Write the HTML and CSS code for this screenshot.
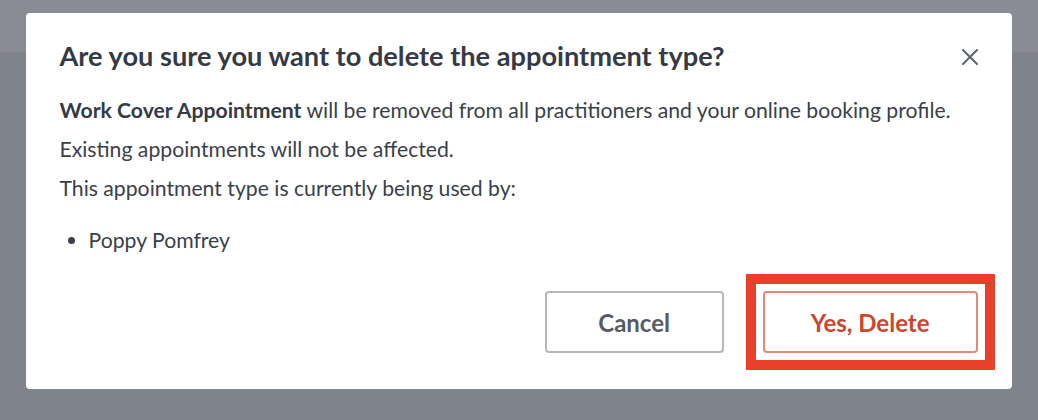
FILE: index.html
```html
<!DOCTYPE html>
<html lang="en">
<head>
    <meta charset="UTF-8">
    <meta name="viewport" content="width=device-width, initial-scale=1.0">
    <title>Delete appointment type</title>
    <link rel="stylesheet" href="styles.css">
</head>
<body>
    <div class="page-header"></div>
    <div class="page-body"></div>

    <div class="backdrop">
        <div class="modal">
            <div class="modal-header">
                <h2>Are you sure you want to delete the appointment type?</h2>
                <button class="btn-close" aria-label="Close">
                    <svg width="16" height="16" viewBox="0 0 16 16">
                        <path d="M1 1L15 15M15 1L1 15" stroke="#5d626c" stroke-width="2" stroke-linecap="round" fill="none"/>
                    </svg>
                </button>
            </div>
            <div class="modal-body">
                <p><strong>Work Cover Appointment</strong> will be removed from all practitioners and your online booking profile.</p>
                <p>Existing appointments will not be affected.</p>
                <p>This appointment type is currently being used by:</p>
                <ul>
                    <li>Poppy Pomfrey</li>
                </ul>
            </div>
            <div class="modal-footer">
                <button class="btn btn-cancel">Cancel</button>
                <span class="highlight">
                    <button class="btn btn-delete">Yes, Delete</button>
                </span>
            </div>
        </div>
    </div>
</body>
</html>
```

FILE: styles.css
```css
* {
    padding: 0;
    margin: 0;
    box-sizing: border-box;
}
body {
    font-family: Lato, "Open Sans", sans-serif;
    background: #7f838b;
    color: #3a3f4a;
    height: 420px;
    overflow: hidden;
}
.page-header {
    height: 53px;
    background: #898c94;
    border-bottom: 1px solid #83868e;
}
.backdrop {
    position: fixed;
    inset: 0;
    display: flex;
    justify-content: center;
    align-items: flex-start;
    padding: 13px 1px 0 0;
}
.modal {
    width: 986px;
    background: #fff;
    border-radius: 4px;
    padding: 27px 34px 36px;
}
.modal-header {
    display: flex;
    justify-content: space-between;
    align-items: center;
    margin-bottom: 25px;
}
.modal-header h2 {
    font-size: 27.2px;
    line-height: 32px;
    font-weight: 700;
    color: #353a45;
}
.btn-close {
    border: none;
    background: none;
    width: 16px;
    height: 16px;
    display: flex;
    margin-top: 2px;
    cursor: pointer;
}
.modal-body p {
    font-size: 21.2px;
    line-height: 27px;
    margin-bottom: 12px;
}
.modal-body strong {
    font-weight: 700;
    color: #353a45;
}
.modal-body ul {
    margin-top: 25px;
    padding-left: 29px;
    font-size: 21.2px;
    line-height: 27px;
}
.modal-footer {
    display: flex;
    justify-content: flex-end;
    gap: 39px;
    margin-top: 37px;
}
.btn {
    height: 62px;
    padding: 0 46px;
    background: #fff;
    border-radius: 4px;
    font-family: Lato, "Open Sans", sans-serif;
    font-size: 24px;
    font-weight: 700;
    cursor: pointer;
}
.btn-cancel {
    min-width: 179px;
    border: 2px solid #b5b7bc;
    color: #565b66;
}
.btn-delete {
    border: 2px solid #e3897c;
    color: #c9472f;
}
.highlight {
    display: flex;
    margin: -17px;
    padding: 7px;
    border: 10px solid #e8402a;
}
```
